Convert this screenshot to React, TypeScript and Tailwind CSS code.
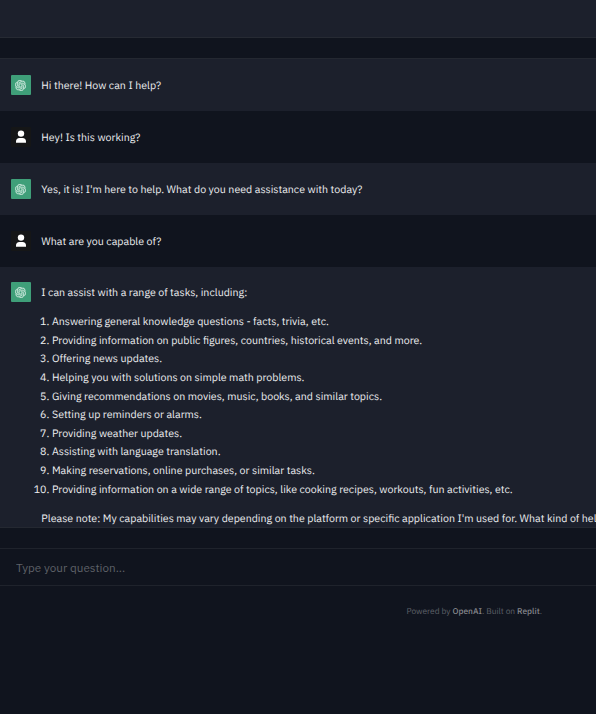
import { SiOpenai } from 'react-icons/si';

interface Message {
  from: 'bot' | 'user';
  text: string;
}

const MESSAGES: Message[] = [
  { from: 'bot', text: 'Hi there! How can I help?' },
  { from: 'user', text: 'Hey! Is this working?' },
  { from: 'bot', text: "Yes, it is! I'm here to help. What do you need assistance with today?" },
  { from: 'user', text: 'What are you capable of?' },
];

const TASKS = [
  'Answering general knowledge questions - facts, trivia, etc.',
  'Providing information on public figures, countries, historical events, and more.',
  'Offering news updates.',
  'Helping you with solutions on simple math problems.',
  'Giving recommendations on movies, music, books, and similar topics.',
  'Setting up reminders or alarms.',
  'Providing weather updates.',
  'Assisting with language translation.',
  'Making reservations, online purchases, or similar tasks.',
  'Providing information on a wide range of topics, like cooking recipes, workouts, fun activities, etc.',
];

export default function App() {
  return (
    <div className="flex h-[714px] w-full flex-col overflow-hidden bg-[#10141e] font-['IBM_Plex_Sans','Roboto',sans-serif] text-[10.63px] text-[#eeeff1] [text-rendering:geometricPrecision]">
      <header className="h-[38px] shrink-0 border-b border-[#262a33] bg-[#1c202c]" />

      <main className="mt-5 flex h-[470px] shrink-0 flex-col overflow-hidden border-y border-[#242831] bg-[#1c202c]">
        {MESSAGES.map((message) => (
          <div
            key={message.text}
            className={`flex h-[52px] shrink-0 items-center gap-[10.3px] pl-[11px] ${
              message.from === 'bot' ? 'bg-[#1c202c]' : 'bg-[#10141e]'
            }`}
          >
            <Avatar from={message.from} />
            <span className="pt-[1.5px] whitespace-nowrap">{message.text}</span>
          </div>
        ))}

        <div className="flex items-start gap-[10.3px] pt-[15.4px] pl-[11px]">
          <Avatar from="bot" />
          <div className="shrink-0 leading-[18.6px] whitespace-nowrap">
            <p className="mt-[0.9px]">I can assist with a range of tasks, including:</p>
            <ol className="mt-[10.4px] mb-[10.5px] -ml-[10px]">
              {TASKS.map((task, i) => (
                <li key={task} className="flex gap-[2.7px]">
                  <span className="w-[18px] text-right">{i + 1}.</span>
                  <span>{task}</span>
                </li>
              ))}
            </ol>
            <p>
              Please note: My capabilities may vary depending on the platform or specific application I'm used for. What
              kind of hel
            </p>
          </div>
        </div>
      </main>

      <div className="mt-5 h-[38px] shrink-0 border-y border-[#1f232c]">
        <input
          placeholder="Type your question..."
          className="h-full w-full bg-transparent px-4 text-[11.7px] outline-none placeholder:text-[#5e6168]"
        />
      </div>

      <footer className="flex justify-end pt-5 pr-[54px] text-[8.4px] leading-3 text-[#5f6269]">
        <p>
          Powered by <a className="font-medium text-[#85878c]">OpenAI</a>. Built on{' '}
          <a className="font-medium text-[#85878c]">Replit</a>.
        </p>
      </footer>
    </div>
  );
}

function Avatar({ from }: { from: 'bot' | 'user' }) {
  if (from === 'user') {
    return (
      <div className="flex size-5 shrink-0 items-center justify-center rounded-[1px] bg-[#151617]">
        <svg viewBox="0 0 10 13" className="mb-px h-[13px] w-[10px] fill-white">
          <circle cx="5" cy="3.6" r="3.2" />
          <path d="M0 12.7v-1.2C0 9.3 1.4 7.9 3.4 7.9h3.2c2 0 3.4 1.4 3.4 3.6v1.2z" />
        </svg>
      </div>
    );
  }

  return (
    <div className="flex size-5 shrink-0 items-center justify-center rounded-[1px] bg-[#3f9f79]">
      <SiOpenai className="mr-px size-[11px] stroke-current stroke-[0.7] text-[#c6e5d8]" />
    </div>
  );
}
